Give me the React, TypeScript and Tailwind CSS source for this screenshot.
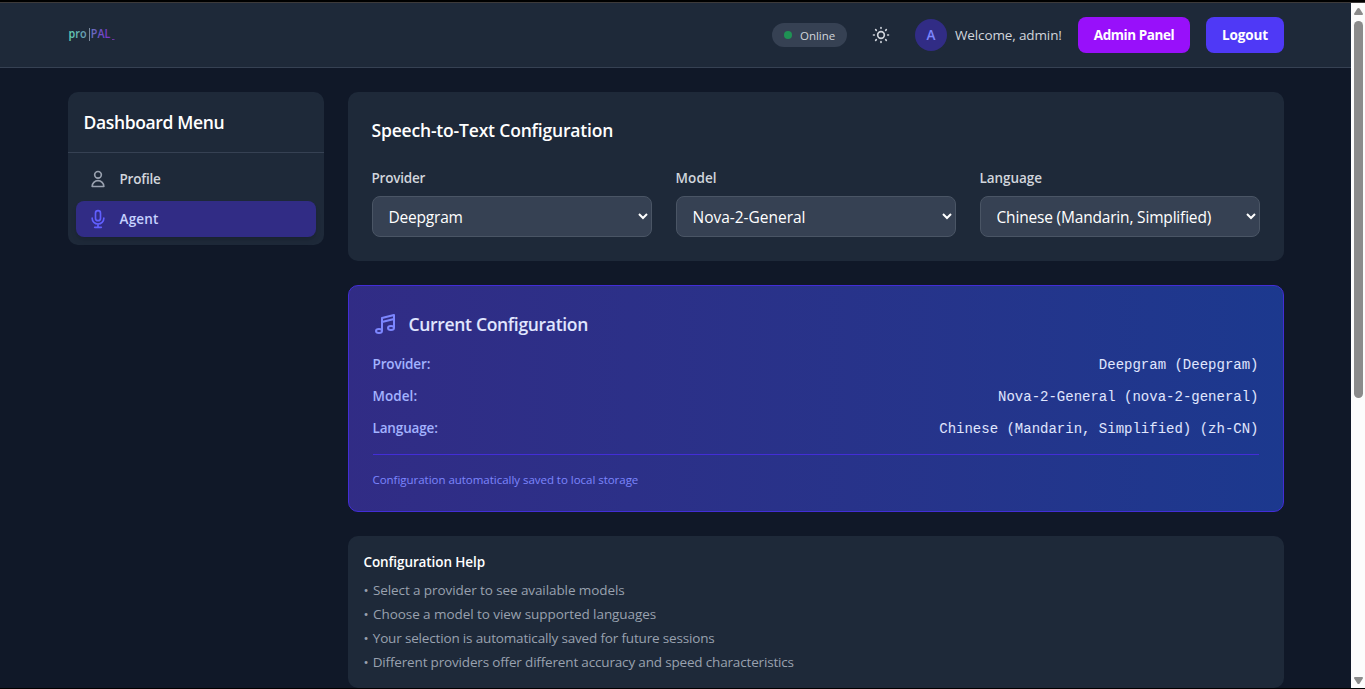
import type { ReactNode } from "react";

type IconProps = { className: string; width?: number; paths: string[] };

function Icon({ className, width = 2, paths }: IconProps) {
  return (
    <svg
      className={className}
      viewBox="0 0 24 24"
      fill="none"
      stroke="currentColor"
      strokeWidth={width}
      strokeLinecap="round"
      strokeLinejoin="round"
      aria-hidden="true"
    >
      {paths.map((d) => (
        <path key={d} d={d} />
      ))}
    </svg>
  );
}

const SUN = [
  "M12 3v1m0 16v1m9-9h-1M4 12H3m15.364 6.364l-.707-.707M6.343 6.343l-.707-.707m12.728 0l-.707.707M6.343 17.657l-.707.707M16 12a4 4 0 11-8 0 4 4 0 018 0z",
];
const USER = ["M16 7a4 4 0 11-8 0 4 4 0 018 0z", "M12 14a7 7 0 00-7 7h14a7 7 0 00-7-7z"];
const MIC = [
  "M19 11a7 7 0 01-7 7m0 0a7 7 0 01-7-7m7 7v4m0 0H8m4 0h4m-4-8a3 3 0 01-3-3V5a3 3 0 116 0v6a3 3 0 01-3 3z",
];
const MUSIC = [
  "M9 19V6l12-3v13M9 19c0 1.105-1.343 2-3 2s-3-.895-3-2 1.343-2 3-2 3 .895 3 2zm12-3c0 1.105-1.343 2-3 2s-3-.895-3-2 1.343-2 3-2 3 .895 3 2zM9 10l12-3",
];

function Logo() {
  return (
    <svg width="48" height="24" viewBox="0 -4 48 24" className="overflow-visible" aria-label="pro|PAL">
      <defs>
        <linearGradient id="wordmark" gradientUnits="userSpaceOnUse" x1="0" y1="0" x2="46" y2="0">
          <stop offset="0" stopColor="#62dcb4" />
          <stop offset="0.38" stopColor="#6a9db4" />
          <stop offset="0.55" stopColor="#6a68c0" />
          <stop offset="0.9" stopColor="#7a32cc" />
          <stop offset="1" stopColor="#7a32cc" />
        </linearGradient>
      </defs>
      <g fill="url(#wordmark)" fontFamily="Open Sans, sans-serif">
        <text x="0.6" y="11.2" fontSize="12" fontWeight="600" textLength="18" lengthAdjust="spacingAndGlyphs">
          pro
        </text>
        <text x="22.8" y="11.2" fontSize="12" fontWeight="600" textLength="19.6" lengthAdjust="spacingAndGlyphs">
          PAL
        </text>
      </g>
      <rect x="21" y="1" width="1" height="13" fill="#7b8a9c" />
      <rect x="44" y="12" width="2.5" height="1" fill="#6a35a5" />
    </svg>
  );
}

function Header() {
  return (
    <header className="h-[65px] border-b border-gray-700 bg-gray-800 pl-[68px]">
      <div className="flex h-16 w-[1216px] items-center justify-between">
        <Logo />
        <div className="flex items-center">
          <div className="flex h-6 w-[75px] items-center gap-2 rounded-full bg-gray-700 pl-3">
            <span className="size-2 rounded-full bg-[#1f9254]" />
            <span className="mt-0.5 text-[11.5px] leading-4 tracking-[-0.03px] text-gray-300">Online</span>
          </div>
          <button className="ml-4 flex size-9 items-center justify-center rounded-lg text-gray-300">
            <Icon className="size-5" paths={SUN} />
          </button>
          <div className="ml-4 flex size-8 items-center justify-center rounded-full bg-indigo-900">
            <span className="text-[13.5px] font-semibold text-indigo-400">A</span>
          </div>
          <span className="ml-2 w-[107px] text-[13.5px] tracking-[-0.126px] whitespace-nowrap text-gray-300">
            Welcome, admin!
          </span>
          <button className="ml-4 h-9 w-28 rounded-lg bg-[#9810fa] text-[13.5px] font-bold tracking-[-0.45px] text-white">
            Admin Panel
          </button>
          <button className="ml-4 h-9 w-[78px] rounded-lg bg-[#4f39f6] text-[13.5px] font-bold tracking-[-0.1px] text-white">
            Logout
          </button>
        </div>
      </div>
    </header>
  );
}

function Sidebar() {
  return (
    <aside className="w-64 self-start rounded-[10px] bg-gray-800">
      <div className="border-b border-gray-700 p-4">
        <h2 className="text-[17.5px] leading-7 font-semibold tracking-[-0.36px] text-white">Dashboard Menu</h2>
      </div>
      <nav className="space-y-1 p-2">
        <a className="flex items-center gap-3 rounded-lg px-3 py-2 text-[13.5px] leading-5 font-semibold tracking-[-0.2px] text-gray-300">
          <Icon className="size-5 text-gray-400" paths={USER} />
          Profile
        </a>
        <a className="flex items-center gap-3 rounded-lg bg-indigo-900 px-3 py-2 text-[13.5px] leading-5 font-semibold tracking-[0.2px] text-indigo-200 shadow-md">
          <Icon className="size-5 text-[#615fff]" paths={MIC} />
          Agent
        </a>
      </nav>
    </aside>
  );
}

function Field({ label, children }: { label: ReactNode; children: ReactNode }) {
  return (
    <label className="block">
      <span className="mb-2 block text-[13.5px] leading-5 font-semibold text-gray-300">{label}</span>
      {children}
    </label>
  );
}

function SpeechCard() {
  return (
    <section className="rounded-[10px] bg-gray-800 p-6">
      <h2 className="mb-6 text-[17.5px] leading-7 font-semibold tracking-[-0.18px] text-white">
        Speech-to-Text Configuration
      </h2>
      <div className="grid grid-cols-3 gap-6">
        <Field label={<span className="tracking-[-0.2px]">Provider</span>}>
          <select className="block h-[41px] w-full rounded-lg border border-gray-600 bg-gray-700 px-3 pt-px text-[15.5px] tracking-[-0.2px] text-white">
            <option>Deepgram</option>
          </select>
        </Field>
        <Field label={<span className="tracking-[0.1px]">Model</span>}>
          <select className="block h-[41px] w-full rounded-lg border border-gray-600 bg-gray-700 px-3 pt-px text-[15.5px] tracking-[-0.02px] text-white">
            <option>Nova-2-General</option>
          </select>
        </Field>
        <Field label={<span className="tracking-[-0.06px]">Language</span>}>
          <select className="block h-[41px] w-full rounded-lg border border-gray-600 bg-gray-700 px-3 pt-px text-[15.5px] tracking-[-0.18px] text-white">
            <option>Chinese (Mandarin, Simplified)</option>
          </select>
        </Field>
      </div>
    </section>
  );
}

function Row({ label, value }: { label: ReactNode; value: string }) {
  return (
    <div className="flex h-5 items-center justify-between">
      <span className="text-[13.5px] leading-5 font-semibold tracking-[-0.15px] text-indigo-300">{label}</span>
      <span className="pt-0.5 font-['Liberation_Mono',monospace] text-[14px] leading-5 text-indigo-100">{value}</span>
    </div>
  );
}

function CurrentCard() {
  return (
    <section className="rounded-[10px] border border-indigo-700 bg-linear-to-r from-indigo-900 to-blue-900 p-6">
      <div className="mb-4 flex items-center">
        <Icon className="mr-3 size-6 text-indigo-400" paths={MUSIC} />
        <h3 className="text-[17.5px] leading-7 font-semibold tracking-[-0.32px] text-indigo-100">
          Current Configuration
        </h3>
      </div>
      <div className="space-y-3">
        <Row label="Provider:" value="Deepgram (Deepgram)" />
        <Row label={<span className="tracking-[0.05px]">Model:</span>} value="Nova-2-General (nova-2-general)" />
        <Row label="Language:" value="Chinese (Mandarin, Simplified) (zh-CN)" />
      </div>
      <div className="mt-4 border-t border-indigo-700 pt-[17px]">
        <p className="-mb-px text-[11.5px] leading-4 tracking-[-0.03px] text-indigo-400">
          Configuration automatically saved to local storage
        </p>
      </div>
    </section>
  );
}

function Bullet() {
  return <span className="mr-px">•</span>;
}

function HelpCard() {
  return (
    <section className="rounded-[10px] bg-gray-800 p-4">
      <h4 className="mb-2 text-[13.5px] leading-5 font-semibold tracking-[-0.1px] text-white">Configuration Help</h4>
      <ul className="space-y-1 text-[13.5px] leading-5 text-gray-400">
        <li className="tracking-[-0.09px]">
          <Bullet /> Select a provider to see available models
        </li>
        <li className="tracking-[-0.06px]">
          <Bullet /> Choose a model to view supported languages
        </li>
        <li className="tracking-[-0.165px]">
          <Bullet /> Your selection is automatically saved for future sessions
        </li>
        <li className="tracking-[-0.17px]">
          <Bullet /> Different providers offer different accuracy and speed characteristics
        </li>
      </ul>
    </section>
  );
}

function Scrollbar() {
  return (
    <div className="flex w-3.5 flex-col items-center bg-[#fcfcfc] pt-[5px] pb-1">
      <svg width="9" height="7" viewBox="0 0 9 7" fill="#8b8b8b">
        <path d="M4.5 0c.5 0 .8.2 1.1.6L8.8 5.5c.5.8.1 1.5-.8 1.5H1C.1 7-.3 6.3.2 5.5L3.4.6C3.7.2 4 0 4.5 0z" />
      </svg>
      <div className="mt-1.5 h-[377px] w-[9px] rounded-full bg-[#8b8b8b]" />
      <svg className="mt-auto" width="9" height="7" viewBox="0 0 9 7" fill="#8b8b8b">
        <path d="M4.5 7c.5 0 .8-.2 1.1-.6L8.8 1.5C9.3.7 8.9 0 8 0H1C.1 0-.3.7.2 1.5L3.4 6.4C3.7 6.8 4 7 4.5 7z" />
      </svg>
    </div>
  );
}

export default function App() {
  return (
    <div className="flex h-[689px] w-[1365px] flex-col overflow-hidden bg-black font-['Open_Sans','Noto_Sans',sans-serif]">
      <div className="h-[3px] shrink-0 border-b border-[#3d3a3a]" />
      <div className="flex h-[685px] shrink-0">
        <div className="w-[1351px] bg-gray-900">
          <Header />
          <main className="mx-auto flex w-[1216px] gap-6 pt-6">
            <Sidebar />
            <div className="flex w-[936px] flex-col gap-6">
              <SpeechCard />
              <CurrentCard />
              <HelpCard />
            </div>
          </main>
        </div>
        <Scrollbar />
      </div>
    </div>
  );
}
